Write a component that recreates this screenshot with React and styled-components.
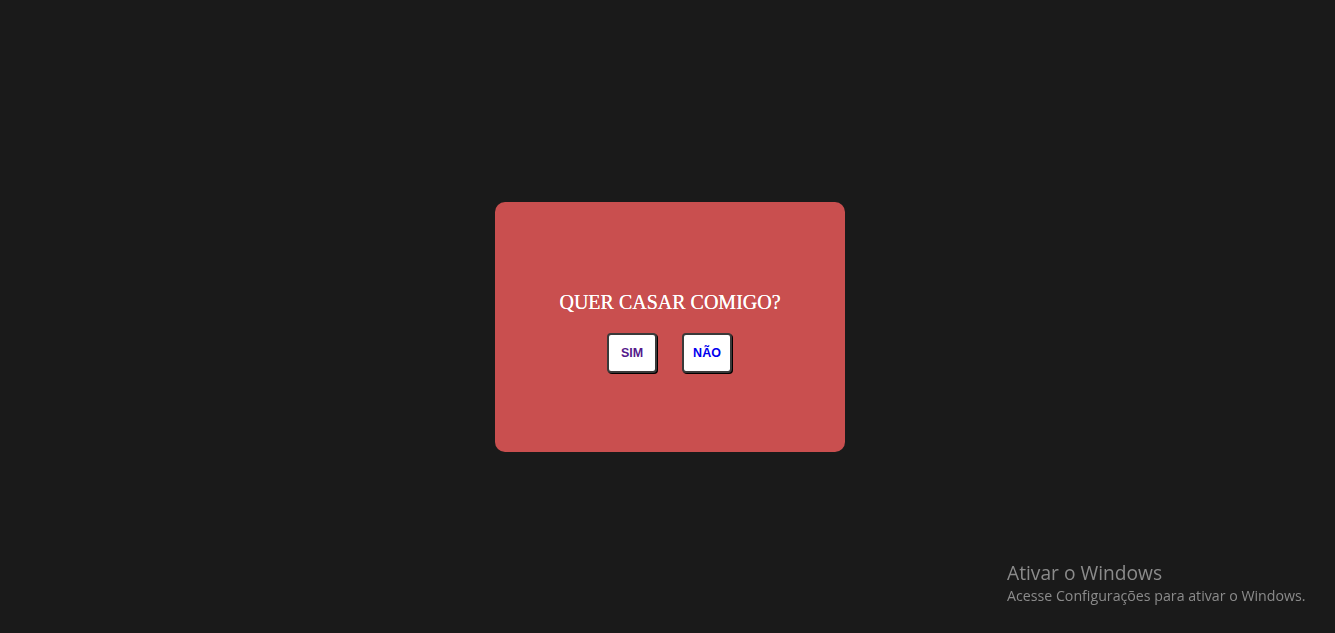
import React from 'react'
import styled, { createGlobalStyle } from 'styled-components'

const GlobalStyle = createGlobalStyle`
    html, body {
        margin: 0;
        padding: 0;
        background: #1a1a1a;
    }
`

const Page = styled.div`
    height: 633px;
    display: flex;
    align-items: center;
    justify-content: center;
    padding: 21px 0 0 5px;
    box-sizing: border-box;
`

const Card = styled.div`
    width: 350px;
    height: 250px;
    background: #c94f4f;
    border-radius: 10px;
    display: flex;
    flex-direction: column;
    align-items: center;
    justify-content: center;
    padding-top: 9px;
    box-sizing: border-box;
`

const Title = styled.h1`
    margin: 0 0 19px;
    font-family: "Liberation Serif", serif;
    font-weight: normal;
    font-size: 20px;
    color: #fff;
    text-shadow: 0 0 0.4px #fff;
`

const Buttons = styled.div`
    display: flex;
    gap: 25px;
    margin-left: -1px;
`

const Choice = styled.a`
    width: 50px;
    height: 40px;
    box-sizing: border-box;
    display: flex;
    align-items: center;
    justify-content: center;
    background: #fff;
    border: 2px solid #3a3a3a;
    border-radius: 4px;
    box-shadow: 1px 1px 0 #000;
    font-family: "Liberation Sans", Arial, sans-serif;
    font-weight: bold;
    font-size: 12.5px;
    text-decoration: none;
    color: ${props => props.$visited ? '#551a8b' : '#0000ee'};
`

const Watermark = styled.div`
    position: fixed;
    left: 1007px;
    top: 560px;
    font-family: "Open Sans", "Noto Sans", sans-serif;
    color: #8b8b8b;
    h2 {
        margin: 0;
        font-size: 19.2px;
        font-weight: normal;
        line-height: 25px;
    }
    p {
        margin: 0;
        font-size: 14.2px;
        line-height: 21px;
    }
`

export default function App() {
    return (
        <>
            <GlobalStyle />
            <Page>
                <Card>
                    <Title>QUER CASAR COMIGO?</Title>
                    <Buttons>
                        <Choice href="#sim" $visited>SIM</Choice>
                        <Choice href="#nao">NÃO</Choice>
                    </Buttons>
                </Card>
            </Page>
            <Watermark>
                <h2>Ativar o Windows</h2>
                <p>Acesse Configurações para ativar o Windows.</p>
            </Watermark>
        </>
    )
}
